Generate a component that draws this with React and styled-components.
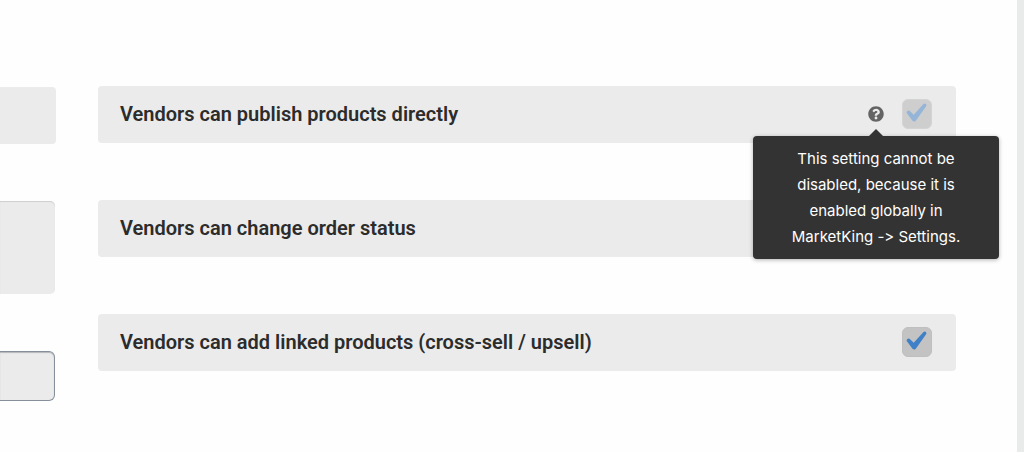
import React from "react";
import styled, { createGlobalStyle } from "styled-components";
import { FaQuestionCircle } from "react-icons/fa";

const GlobalStyle = createGlobalStyle`
  *, *::before, *::after { box-sizing: border-box; }
  body {
    margin: 0;
    background: #e9eaea;
    font-family: Roboto, "Liberation Sans", sans-serif;
  }
`;

const Page = styled.main`
  display: grid;
  grid-template-columns: 56px 1fr;
  column-gap: 42px;
  min-height: 100vh;
  margin-right: 7px;
  padding: 86px 61px 50px 0;
  background: #fefefe;
`;

const FieldColumn = styled.section`
  display: flex;
  flex-direction: column;
  gap: 57px;
  padding-top: 1px;
`;

const FieldPanel = styled.div`
  height: 57px;
  border-radius: 0 4px 4px 0;
  background: #ebebeb;
`;

const NotesField = styled.textarea`
  display: block;
  width: 55px;
  height: 93px;
  margin: 0;
  border: 0;
  border-radius: 0 5px 5px 0;
  background: #ebebeb;
  box-shadow: inset 0 1px 1px #cfcfcf;
  resize: none;
`;

const TextField = styled.input`
  width: 55px;
  height: 50px;
  border: 1px solid #87909a;
  border-left: 0;
  border-radius: 0 6px 6px 0;
  background: #ebebeb;
  box-shadow: inset 0 1px 1px #b4b7bb;
`;

const OptionColumn = styled.section`
  display: flex;
  flex-direction: column;
  gap: 57px;
`;

const OptionRow = styled.div`
  display: flex;
  align-items: center;
  gap: 18px;
  min-height: 57px;
  padding: 0 24px 1px 22px;
  border-radius: 4px;
  background: #ebebeb;
`;

const OptionLabel = styled.label`
  flex: 1;
  color: #2c2c2c;
  font-size: 20px;
  font-weight: 600;
  line-height: 24px;
`;

const CheckFrame = styled.span`
  position: relative;
  width: 30px;
  height: 30px;
  opacity: ${(p) => (p.$dimmed ? 0.5 : 1)};
`;

const CheckInput = styled.input`
  display: block;
  width: 30px;
  height: 30px;
  margin: 0;
  appearance: none;
  border: 1px solid #bfbfbf;
  border-radius: 6px;
  background: ${(p) => (p.disabled ? "#b2b2b2" : "#c3c3c3")};

  &:not(:checked) + svg { display: none; }
`;

const CheckMark = styled.svg`
  position: absolute;
  inset: 0;
  pointer-events: none;
`;

const HelpAnchor = styled.span`
  position: relative;
  display: flex;
`;

const HelpButton = styled.button`
  display: flex;
  padding: 0;
  border: 0;
  background: none;
  color: #646464;
  font-size: 16px;
`;

const Tooltip = styled.div`
  position: absolute;
  z-index: 1;
  top: calc(100% + 14px);
  left: 50%;
  width: 246px;
  padding: 10px 30px 9px;
  transform: translateX(-50%);
  border-radius: 4px;
  background: #333333;
  box-shadow: 0 1px 4px rgba(0, 0, 0, 0.3);
  color: #ffffff;
  font-family: Inter, "Liberation Sans", sans-serif;
  font-size: 15px;
  font-feature-settings: "calt" 0;
  line-height: 26px;
  text-align: center;

  &::before {
    content: "";
    position: absolute;
    bottom: 100%;
    left: 50%;
    margin-left: -7px;
    border: 7px solid transparent;
    border-top: 0;
    border-bottom-color: #333333;
  }
`;

function Checkbox({ id, disabled, defaultChecked = true }) {
  return (
    <CheckFrame $dimmed={disabled}>
      <CheckInput
        type="checkbox"
        id={id}
        disabled={disabled}
        defaultChecked={defaultChecked}
      />
      <CheckMark width="30" height="30" viewBox="0 0 30 30" aria-hidden="true">
        <path
          fill="#3f80c6"
          d="M4.9 14.3Q4.2 13.3 5 12.5L5.8 11.8Q6.8 11 7.8 12L11.7 15.8L21.3 5.2Q22.3 4 23.4 4.7L24 5.2Q24.9 6 24.1 7.2L14 21.4Q12.2 23.7 10.3 21.6Z"
        />
      </CheckMark>
    </CheckFrame>
  );
}

function Option({ id, label, help, disabled }) {
  return (
    <OptionRow>
      <OptionLabel htmlFor={id}>{label}</OptionLabel>
      {help && (
        <HelpAnchor>
          <HelpButton type="button" aria-label="Help" aria-describedby={`${id}-help`}>
            <FaQuestionCircle />
          </HelpButton>
          <Tooltip role="tooltip" id={`${id}-help`}>
            {help}
          </Tooltip>
        </HelpAnchor>
      )}
      <Checkbox id={id} disabled={disabled} />
    </OptionRow>
  );
}

export default function App() {
  return (
    <>
      <GlobalStyle />
      <Page>
        <FieldColumn>
          <FieldPanel />
          <NotesField aria-label="Notes" />
          <TextField type="text" aria-label="Value" />
        </FieldColumn>
        <OptionColumn>
          <Option
            id="publish"
            label="Vendors can publish products directly"
            help="This setting cannot be disabled, because it is enabled globally in MarketKing -> Settings."
            disabled
          />
          <Option id="status" label="Vendors can change order status" />
          <Option
            id="linked"
            label="Vendors can add linked products (cross-sell / upsell)"
          />
        </OptionColumn>
      </Page>
    </>
  );
}
